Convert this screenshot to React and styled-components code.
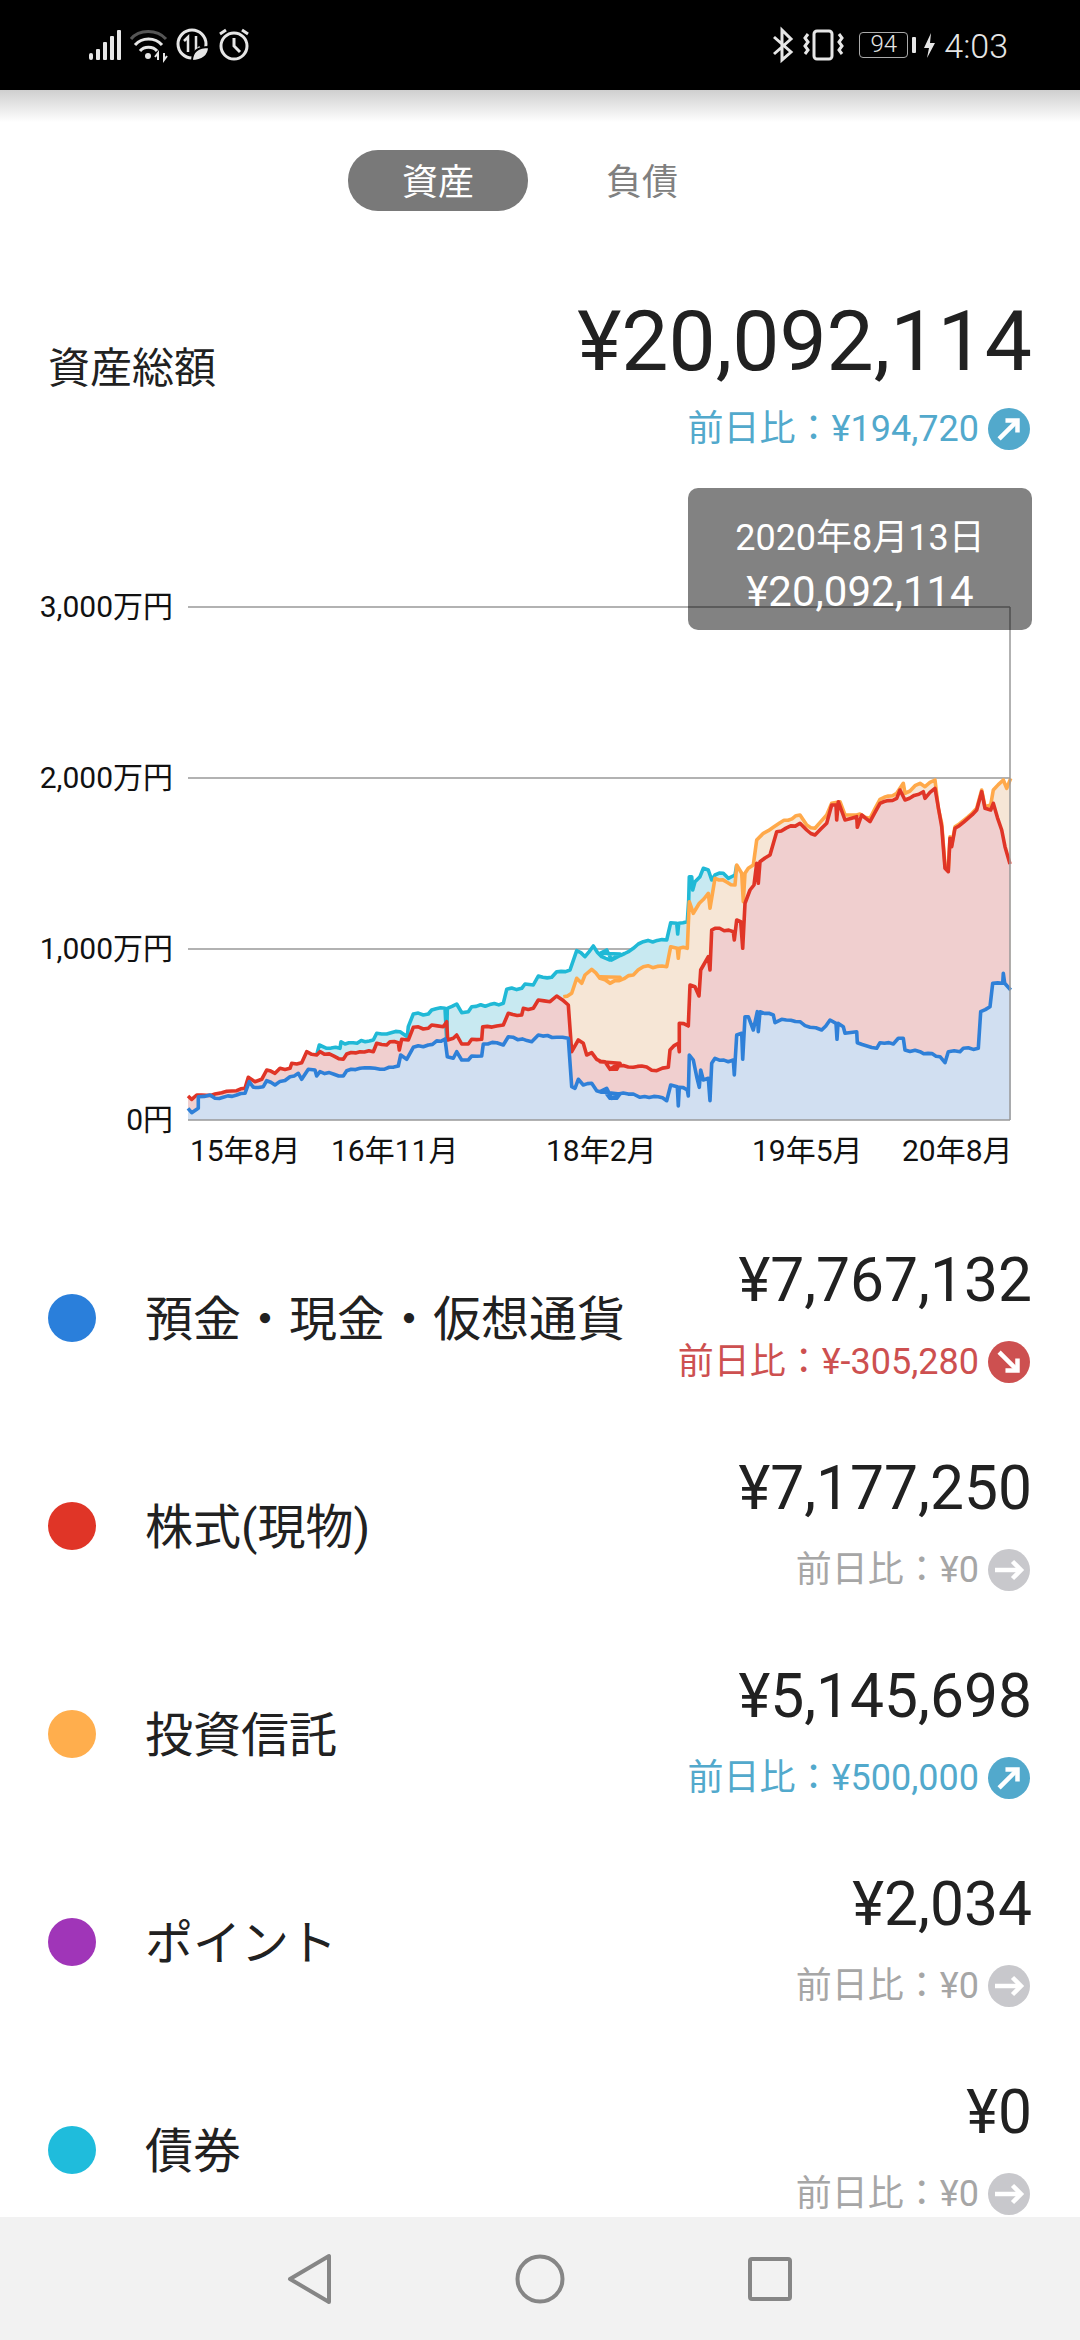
import React from "react";
import styled, { createGlobalStyle } from "styled-components";

const GlobalStyle = createGlobalStyle`
	html, body {
		margin: 0;
		padding: 0;
		background: #fff;
		font-family: Roboto, "Noto Sans CJK JP", sans-serif;
	}
`;

const DELTA_COLORS = { up: "#52a9cc", down: "#cd5050", flat: "#a6a6a6" };
const ICON_COLORS = { up: "#52a9cc", down: "#cd5050", flat: "#c8c8cc" };
const ICON_ANGLES = { up: -45, down: 45, flat: 0 };

const rows = [
	{ color: "#2a7fdb", name: "預金・現金・仮想通貨", value: "¥7,767,132", delta: "¥-305,280", dir: "down" },
	{ color: "#e03527", name: "株式(現物)", value: "¥7,177,250", delta: "¥0", dir: "flat" },
	{ color: "#ffae4d", name: "投資信託", value: "¥5,145,698", delta: "¥500,000", dir: "up" },
	{ color: "#a035b8", name: "ポイント", value: "¥2,034", delta: "¥0", dir: "flat" },
	{ color: "#1fbcdc", name: "債券", value: "¥0", delta: "¥0", dir: "flat" },
];

// traced from the picture: [left half points, right half points]
const series = [
	{
		line: "#20b9d6",
		fill: "#c8e9f1",
		left: [[470,945],[478,915],[500,925],[540,925],[543,905],[555,912],[640,900],[650,880],[680,882],[720,875],[742,890],[745,860],[760,822],[805,822],[815,810],[855,805],[860,900],[862,805],[890,792],[905,818],[925,815],[935,800],[1030,790],[1040,748],[1085,745],[1095,732],[1120,735],[1135,708],[1175,712],[1190,695],[1230,690],[1250,632],[1275,650],[1300,618],[1325,650],[1350,660],[1380,642]],
		right: [[0,640],[20,630],[35,660],[100,625],[130,605],[200,600],[212,548],[230,550],[233,582],[236,550],[262,545],[266,480],[268,410],[275,410],[278,450],[285,425],[300,410],[310,385],[325,390],[335,420],[345,405],[370,400],[385,415],[405,405],[410,375]],
	},
	{
		line: "#ffa94a",
		fill: "#f6e6d6",
		left: [[1210,770],[1235,760],[1250,715],[1265,730],[1275,705],[1295,688],[1320,715],[1350,730],[1380,712]],
		right: [[0,710],[30,730],[100,705],[130,680],[200,680],[212,620],[232,625],[235,655],[238,625],[262,625],[268,485],[280,520],[298,490],[325,460],[330,505],[345,415],[405,435],[410,375],[425,400],[430,485],[435,400],[445,385],[460,375],[470,300],[490,280],[520,262],[540,248],[600,225],[620,255],[645,265],[680,225],[695,190],[720,185],[735,225],[770,225],[780,222],[810,235],[840,178],[890,160],[910,130],[915,160],[960,130],[975,140],[1005,120],[1015,205],[1025,250],[1035,375],[1045,390],[1050,290],[1055,315],[1065,260],[1130,205],[1145,150],[1155,200],[1172,195],[1180,150],[1210,120],[1220,145],[1232,115]],
	},
	{
		line: "#e03527",
		fill: "#f0cfcf",
		left: [[84,1068],[95,1078],[110,1065],[125,1065],[165,1062],[185,1058],[230,1052],[255,1045],[265,1012],[285,1025],[305,1018],[320,990],[345,1000],[360,985],[390,985],[395,970],[425,968],[440,935],[470,945],[480,935],[550,958],[560,942],[600,935],[640,935],[650,910],[680,915],[690,905],[715,908],[718,930],[725,898],[745,900],[760,862],[805,865],[815,855],[850,860],[860,845],[863,900],[880,895],[890,885],[905,912],[925,912],[935,898],[965,898],[968,860],[1010,858],[1030,855],[1045,820],[1085,825],[1090,805],[1120,805],[1135,780],[1170,785],[1190,768],[1225,795],[1235,935],[1255,900],[1270,910],[1280,945],[1295,938],[1310,958],[1335,965],[1350,988],[1370,988],[1380,970]],
		right: [[0,965],[15,965],[30,988],[55,978],[100,982],[125,978],[170,992],[205,982],[210,930],[235,910],[238,935],[238,850],[265,858],[270,735],[285,740],[297,768],[302,690],[325,650],[330,690],[335,570],[345,565],[400,575],[403,600],[410,540],[422,545],[428,625],[435,490],[450,450],[462,435],[470,370],[475,430],[480,365],[510,345],[530,275],[600,250],[620,270],[645,285],[680,250],[695,195],[708,195],[710,240],[715,185],[735,240],[770,230],[772,262],[785,225],[810,245],[840,190],[890,175],[900,150],[915,180],[970,155],[975,175],[1005,145],[1025,260],[1035,385],[1045,395],[1050,295],[1055,320],[1065,265],[1130,210],[1145,155],[1155,205],[1172,210],[1180,190],[1205,270],[1215,320],[1230,372]],
	},
	{
		line: "#2f80d8",
		fill: "#d1dff1",
		left: [[84,1105],[95,1118],[115,1105],[115,1070],[150,1065],[165,1075],[190,1072],[230,1065],[255,1060],[268,1025],[280,1042],[310,1040],[320,1022],[345,1035],[390,1010],[415,1000],[425,1018],[445,988],[465,990],[470,1008],[480,995],[550,1008],[560,992],[600,985],[645,985],[660,988],[715,978],[722,945],[740,958],[760,922],[805,915],[855,897],[862,950],[880,955],[890,935],[905,960],[925,960],[935,948],[965,948],[970,912],[1010,908],[1030,915],[1045,890],[1115,905],[1135,885],[1190,892],[1225,895],[1235,1040],[1245,1045],[1255,1018],[1270,1035],[1295,1030],[1310,1052],[1335,1055],[1350,1075],[1370,1075],[1380,1062]],
		right: [[0,1055],[20,1045],[35,1075],[55,1062],[100,1062],[120,1072],[175,1070],[200,1082],[212,1035],[232,1040],[235,1098],[238,1042],[262,1050],[265,1068],[268,945],[280,960],[290,1010],[298,1042],[302,990],[310,1020],[325,1015],[330,1082],[335,970],[345,955],[385,965],[400,960],[403,1005],[410,885],[425,880],[428,958],[435,830],[445,830],[460,870],[472,815],[475,875],[480,815],[520,825],[525,848],[545,838],[600,845],[630,862],[665,870],[690,840],[708,850],[711,898],[714,850],[730,860],[735,880],[770,875],[772,908],[830,925],[840,908],[880,912],[895,895],[910,895],[915,930],[960,935],[1020,950],[1035,968],[1045,935],[1080,935],[1090,925],[1135,925],[1142,815],[1170,800],[1178,730],[1208,730],[1210,700],[1214,730],[1232,750]],
	},
];

const CHART_TOP = 488;
const BASE_Y = 1120 - CHART_TOP;

const toPoints = (s) => [
	...s.left.map(([x, y]) => [160 + x / 3, 740 + y / 3 - CHART_TOP]),
	...s.right.map(([x, y]) => [600 + x / 3, 740 + y / 3 - CHART_TOP]),
];

// the real data is daily, so break long segments up and wobble them a little
const roughen = (pts) => {
	const out = [];
	pts.forEach(([x, y], i) => {
		if (i > 0) {
			const [px, py] = pts[i - 1];
			const steps = Math.floor((x - px) / 4);
			for (let k = 1; k < steps; k++) {
				const nx = px + ((x - px) * k) / steps;
				const ny = py + ((y - py) * k) / steps;
				out.push([nx, ny + Math.sin(nx * 12.9898) * 1.1]);
			}
		}
		out.push([x, y]);
	});
	return out;
};

const linePath = (pts) => pts.map(([x, y], i) => `${i ? "L" : "M"}${x.toFixed(1)} ${y.toFixed(1)}`).join(" ");

const areaPath = (pts) => `${linePath(pts)} L${pts[pts.length - 1][0].toFixed(1)} ${BASE_Y} L${pts[0][0].toFixed(1)} ${BASE_Y} Z`;

const yLabels = [
	{ text: "3,000万円", y: 607 },
	{ text: "2,000万円", y: 778 },
	{ text: "1,000万円", y: 949 },
	{ text: "0円", y: 1120 },
];

const xLabels = [
	{ text: "15年8月", x: 190 },
	{ text: "16年11月", x: 331 },
	{ text: "18年2月", x: 546 },
	{ text: "19年5月", x: 752 },
	{ text: "20年8月", x: 902 },
];

const Chart = () => {
	const traced = series.map((s) => ({ ...s, pts: roughen(toPoints(s)) }));
	return (
		<ChartSvg viewBox="0 0 1080 726">
			<GridLine x1="188" x2="1010" y1={949 - CHART_TOP} y2={949 - CHART_TOP} />
			{traced.map((s) => (
				<path key={s.line} d={areaPath(s.pts)} fill={s.fill} />
			))}
			<GridLine x1="188" x2="1010" y1={778 - CHART_TOP} y2={778 - CHART_TOP} />
			{traced.map((s) => (
				<path key={s.line} d={linePath(s.pts)} fill="none" stroke={s.line} strokeWidth="3.6" strokeLinejoin="round" />
			))}
			<GridLine x1="188" x2="1010" y1={607 - CHART_TOP} y2={607 - CHART_TOP} />
			<GridLine x1="188" x2="1010" y1={BASE_Y} y2={BASE_Y} />
			<GridLine x1="1010" x2="1010" y1={607 - CHART_TOP} y2={BASE_Y} />
			{yLabels.map((l) => (
				<AxisText key={l.text} x="173" y={l.y - CHART_TOP + 10} textAnchor="end">
					{l.text}
				</AxisText>
			))}
			{xLabels.map((l) => (
				<AxisText key={l.text} x={l.x} y={1161 - CHART_TOP}>
					{l.text}
				</AxisText>
			))}
		</ChartSvg>
	);
};

const DeltaIcon = ({ dir }) => (
	<svg width="42" height="42" viewBox="0 0 42 42">
		<circle cx="21" cy="21" r="21" fill={ICON_COLORS[dir]} />
		<g transform={`rotate(${ICON_ANGLES[dir]} 21 21)`} fill="none" stroke="#fff" strokeWidth="4.5">
			<path d="M7 21H33" />
			<path d="M24.5 12.5L33 21L24.5 29.5" />
		</g>
	</svg>
);

const Delta = ({ dir, amount }) => (
	<DeltaRow $dir={dir}>
		<span>前日比：{amount}</span>
		<DeltaIcon dir={dir} />
	</DeltaRow>
);

const App = () => {
	return (
		<>
			<GlobalStyle />
			<Page>
				<StatusBar>
					<StatusGroup>
						<svg width="41" height="50" viewBox="5 0 41 50" fill="#e6e6e6">
							<rect x="9" y="33" width="4" height="7" rx="2" />
							<rect x="16" y="29" width="4" height="11" rx="1" />
							<rect x="23" y="22" width="4" height="18" rx="1" />
							<rect x="30" y="16" width="4" height="24" rx="1" />
							<rect x="37" y="10" width="4" height="30" rx="1" />
						</svg>
						<svg width="46" height="50" viewBox="46 0 46 50" fill="none" strokeWidth="3">
							<path d="M51 19C59 9 77 9 86 19" stroke="#555" />
							<path d="M55 25C62 17 75 17 82 25" stroke="#e6e6e6" />
							<path d="M60 31C64 26 73 26 77 31" stroke="#e6e6e6" />
							<circle cx="68" cy="36" r="3" fill="#e6e6e6" stroke="none" />
							<path d="M78 40V33L75 37M84 33V40L87 36" stroke="#e6e6e6" strokeWidth="2" />
						</svg>
						<svg width="42" height="50" viewBox="92 0 42 50" fill="none" stroke="#e6e6e6">
							<circle cx="112" cy="24" r="14" strokeWidth="3" />
							<path d="M108 32V17L104 21M116 16V31L120 27" strokeWidth="2.5" />
							<path d="M112 41C112 31 119 27 129 27C129 36 122 41 112 41Z" fill="#e6e6e6" stroke="#000" strokeWidth="2" />
						</svg>
						<svg width="38" height="50" viewBox="134 0 38 50" fill="none" stroke="#e6e6e6" strokeWidth="3">
							<circle cx="154" cy="26" r="13" />
							<path d="M154 18V26L160 32" />
							<path d="M140 14L146 10M162 10L168 14" />
						</svg>
					</StatusGroup>
					<StatusGroup>
						<svg width="90" height="50" viewBox="10 0 90 50" fill="none" stroke="#e6e6e6" strokeWidth="3">
							<path d="M15 17L32 32L23 40V10L32 19L15 34" />
							<rect x="55" y="11" width="18" height="28" rx="3" />
							<path d="M49 14L46 18L49 22L46 26L49 30L46 34" />
							<path d="M80 14L83 18L80 22L83 26L80 30L83 34" />
						</svg>
						<Battery>94</Battery>
						<svg width="32" height="50" viewBox="150 0 32 50" fill="#e6e6e6">
							<rect x="153" y="17" width="4" height="16" rx="1" />
							<path d="M172 13L165 28H170L168 38L176 23H171Z" />
						</svg>
						<Clock>4:03</Clock>
					</StatusGroup>
				</StatusBar>
				<Shade />
				<Content>
					<Tabs>
						<Tab $active>資産</Tab>
						<Tab>負債</Tab>
					</Tabs>
					<Summary>
						<SummaryLabel>資産総額</SummaryLabel>
						<Amounts>
							<TotalValue>¥20,092,114</TotalValue>
							<Delta dir="up" amount="¥194,720" />
						</Amounts>
					</Summary>
					<ChartBox>
						<Chart />
						<Tooltip>
							<div>2020年8月13日</div>
							<TooltipAmount>¥20,092,114</TooltipAmount>
						</Tooltip>
					</ChartBox>
					{rows.map((row) => (
						<Row key={row.name}>
							<Dot $color={row.color} />
							<RowName>{row.name}</RowName>
							<RowAmounts>
								<RowValue>{row.value}</RowValue>
								<Delta dir={row.dir} amount={row.delta} />
							</RowAmounts>
						</Row>
					))}
				</Content>
				<NavBar>
					<NavCell>
						<svg width="46" height="52" viewBox="0 0 46 52" fill="none" stroke="#868686" strokeWidth="4" strokeLinejoin="round">
							<path d="M42 3V49L3 26Z" />
						</svg>
					</NavCell>
					<NavCell>
						<svg width="50" height="50" viewBox="0 0 50 50" fill="none" stroke="#868686" strokeWidth="4">
							<circle cx="25" cy="25" r="22.5" />
						</svg>
					</NavCell>
					<NavCell>
						<svg width="46" height="46" viewBox="0 0 46 46" fill="none" stroke="#868686" strokeWidth="4" strokeLinejoin="round">
							<rect x="3" y="3" width="40" height="40" rx="2" />
						</svg>
					</NavCell>
				</NavBar>
			</Page>
		</>
	);
};

const Page = styled.div`
	width: 1080px;
	height: 2340px;
	display: flex;
	flex-direction: column;
	overflow: hidden;
	background: #fff;
`;

const StatusBar = styled.div`
	flex: none;
	height: 90px;
	padding: 20px 72px 20px 85px;
	box-sizing: border-box;
	background: #000;
	display: flex;
	justify-content: space-between;
	align-items: flex-start;
`;

const StatusGroup = styled.div`
	display: flex;
	align-items: flex-start;
`;

const Battery = styled.div`
	width: 49px;
	height: 26px;
	margin: 12px 1px 0 0;
	border: 1.5px solid #aaa;
	border-radius: 4px;
	box-sizing: border-box;
	color: #e6e6e6;
	font-size: 24px;
	font-weight: 300;
	line-height: 23px;
	text-align: center;
`;

const Clock = styled.div`
	margin-left: 3px;
	color: #e6e6e6;
	font-size: 34px;
	font-weight: 300;
	line-height: 52px;
`;

const Shade = styled.div`
	flex: none;
	height: 32px;
	background: linear-gradient(#cfcfcf, #fff);
`;

const Content = styled.div`
	flex: 1;
	min-height: 0;
	overflow: hidden;
`;

const Tabs = styled.div`
	display: flex;
	justify-content: center;
	gap: 24px;
	margin-top: 28px;
`;

const Tab = styled.div`
	width: 180px;
	height: 61px;
	border-radius: 30px;
	background: ${(p) => (p.$active ? "#797979" : "transparent")};
	color: ${(p) => (p.$active ? "#fff" : "#808080")};
	font-size: 36px;
	line-height: 66px;
	text-align: center;
`;

const Summary = styled.div`
	display: flex;
	justify-content: space-between;
	align-items: flex-start;
	padding: 81px 48px 0;
`;

const SummaryLabel = styled.div`
	margin-top: 47px;
	color: #212121;
	font-size: 42px;
	line-height: 60px;
`;

const Amounts = styled.div`
	display: flex;
	flex-direction: column;
	align-items: flex-end;
`;

const TotalValue = styled.div`
	margin-bottom: 16px;
	color: #212121;
	font-size: 84px;
	line-height: 100px;
`;

const DeltaRow = styled.div`
	display: flex;
	align-items: center;
	gap: 9px;
	margin-right: 2px;
	height: 42px;
	color: ${(p) => DELTA_COLORS[p.$dir]};
	font-size: 36px;
	line-height: 42px;
`;

const ChartBox = styled.div`
	position: relative;
	height: 726px;
	margin-top: 38px;
`;

const ChartSvg = styled.svg`
	display: block;
	width: 1080px;
	height: 726px;
`;

const GridLine = styled.line`
	stroke: #999;
	stroke-width: 1.5;
`;

const AxisText = styled.text`
	fill: #111;
	font-size: 30px;
	font-family: Roboto, "Noto Sans CJK JP", sans-serif;
`;

const Tooltip = styled.div`
	position: absolute;
	top: 0;
	right: 48px;
	width: 344px;
	height: 142px;
	padding-top: 23px;
	box-sizing: border-box;
	border-radius: 10px;
	background: rgba(0, 0, 0, 0.49);
	color: #fff;
	font-size: 36px;
	line-height: 54px;
	text-align: center;
`;

const TooltipAmount = styled.div`
	font-size: 42px;
`;

const Row = styled.div`
	display: flex;
	align-items: center;
	height: 208px;
	padding: 0 48px;
`;

const Dot = styled.div`
	flex: none;
	width: 48px;
	height: 48px;
	border-radius: 50%;
	background: ${(p) => p.$color};
`;

const RowName = styled.div`
	flex: 1;
	margin: 0 0 7px 49px;
	color: #212121;
	font-size: 48px;
`;

const RowAmounts = styled.div`
	display: flex;
	flex-direction: column;
	align-items: flex-end;
	margin-bottom: 7px;
`;

const RowValue = styled.div`
	margin-bottom: 25px;
	color: #212121;
	font-size: 60.5px;
	line-height: 70px;
`;

const NavBar = styled.div`
	flex: none;
	height: 123px;
	display: flex;
	justify-content: center;
	background: #f2f2f2;
`;

const NavCell = styled.div`
	width: 230px;
	display: flex;
	justify-content: center;
	align-items: center;
`;

export default App;
